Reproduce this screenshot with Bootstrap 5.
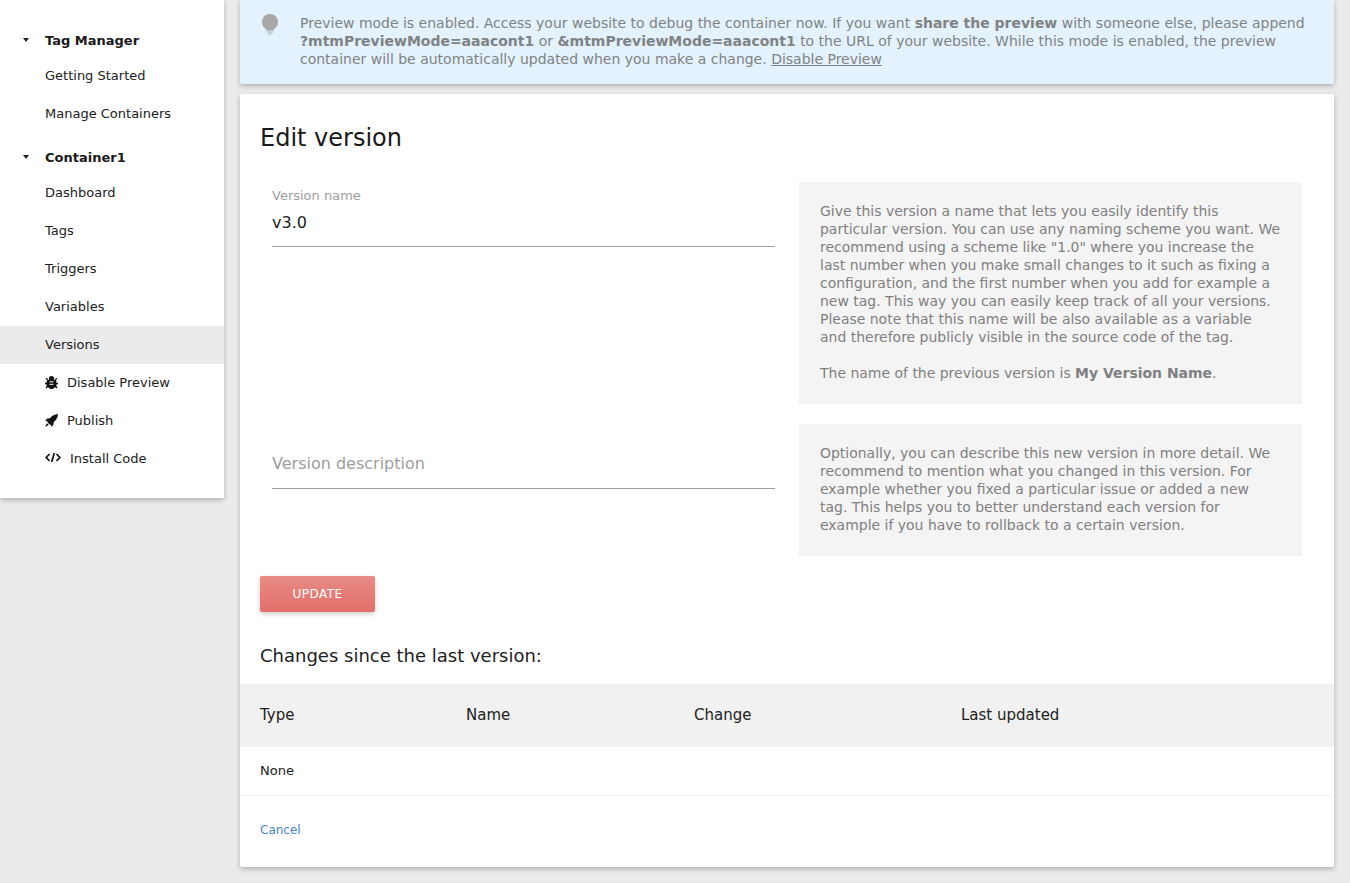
<!DOCTYPE html>
<html lang="en">
<head>
    <meta charset="UTF-8">
    <title>Edit version</title>
    <link rel="stylesheet" href="https://cdn.jsdelivr.net/npm/bootstrap@5.3.0/dist/css/bootstrap.min.css">
    <style>
        body {
            font-family: "DejaVu Sans", sans-serif;
            background-color: #ebebeb;
            color: #212121;
            font-size: 13px;
            height: 883px;
            overflow: hidden;
        }

        .page-wrap { gap: 16px; }

        /* side menu */
        .side-menu {
            width: 224px;
            height: 498px;
            background: #fff;
            padding-top: 25px;
            box-shadow: 0 2px 5px rgba(0, 0, 0, .26);
            flex-shrink: 0;
        }

        .menu-head {
            height: 32px;
            padding-left: 45px;
            font-weight: 700;
            color: #1a1a1a;
            position: relative;
            display: flex;
            align-items: center;
        }

        .menu-head.second { margin-top: 9px; }

        .menu-head::before {
            content: "";
            position: absolute;
            left: 23px;
            top: 13px;
            border-left: 3px solid transparent;
            border-right: 3px solid transparent;
            border-top: 4px solid #212121;
        }

        .menu-item {
            height: 38px;
            padding-left: 45px;
            display: flex;
            align-items: center;
            color: #212121;
            text-decoration: none;
        }

        .menu-item.on { background: #ebebeb; }
        .menu-item svg { margin-right: 9px; flex-shrink: 0; }
        .menu-item svg.rocket-ico { margin-top: -2px; }
        .menu-item svg.code-ico { margin-top: -3px; }
        .menu-item svg.bug-ico { margin-top: -1px; }

        /* main */
        .main-col { width: 1094px; }

        .notice-box {
            height: 84px;
            background: #e3f2fd;
            color: #808284;
            font-size: 13.99px;
            line-height: 18px;
            padding: 14px 20px 0 60px;
            position: relative;
            margin-bottom: 10px;
            border-radius: 0 0 2px 2px;
            box-shadow: 0 2px 5px rgba(0, 0, 0, .26);
        }

        .notice-box svg { position: absolute; left: 22px; top: 14px; }
        .notice-box a { color: #808284; }

        .edit-card {
            height: 773px;
            background: #fff;
            border-radius: 2px;
            box-shadow: 0 2px 5px rgba(0, 0, 0, .26);
            padding-top: 28px;
        }

        .edit-title {
            font-size: 24px;
            line-height: 32px;
            font-weight: 400;
            color: #1a1a1a;
            margin: 0 0 28px 20px;
        }

        .form-line { gap: 24px; padding: 0 32px; margin-bottom: 20px; }
        .field-side { width: 503px; flex-shrink: 0; }
        .field-lbl { font-size: 13px; color: #9e9e9e; line-height: 18px; padding-top: 5px; }
        .field-val { font-size: 16px; line-height: 24px; color: #212121; padding-top: 6px; height: 42px; border-bottom: 1px solid #9e9e9e; }
        .field-empty { font-size: 16px; color: #9e9e9e; line-height: 24px; margin-top: 28px; padding-bottom: 12px; border-bottom: 1px solid #9e9e9e; }

        .help-box {
            width: 503px;
            background: #f4f4f4;
            color: #808080;
            font-size: 13.98px;
            line-height: 18px;
            padding: 20px 21.500px 22px 21px;
        }

        .btn-update {
            display: block;
            width: 115px;
            height: 36px;
            margin-left: 20px;
            padding: 0;
            border: 0;
            border-radius: 2px;
            background: linear-gradient(#e78b84, #e2706a);
            color: #fff;
            font-size: 12px;
            letter-spacing: .5px;
            text-transform: uppercase;
            box-shadow: 0 2px 5px rgba(0, 0, 0, .2);
        }

        .changes-title {
            font-size: 18px;
            line-height: 24px;
            font-weight: 400;
            color: #212121;
            margin: 32px 0 16px 20px;
        }

        .change-tbl { width: 100%; margin: 0; }
        .change-tbl th {
            background: #f1f1f1;
            font-weight: 400;
            font-size: 15px;
            height: 63px;
            padding: 0 0 0 20px;
            vertical-align: middle;
            border: 0;
            color: #212121;
        }

        .change-tbl th.col-type { width: 206px; }
        .change-tbl th.col-name { width: 228px; }
        .change-tbl th.col-change { width: 267px; }

        .change-tbl td {
            font-size: 13px;
            height: 48px;
            padding: 0 0 0 20px;
            vertical-align: middle;
            border-bottom: 1px solid #f0f0f0;
            color: #212121;
        }

        .cancel-link { display: block; margin: 25px 0 0 20px; font-size: 12px; color: #4a86c5; text-decoration: none; }
    </style>
</head>

<body>
    <div class="d-flex page-wrap">
        <div class="side-menu">
            <div class="menu-head">Tag Manager</div>
            <a class="menu-item" href="#">Getting Started</a>
            <a class="menu-item" href="#">Manage Containers</a>
            <div class="menu-head second">Container1</div>
            <a class="menu-item" href="#">Dashboard</a>
            <a class="menu-item" href="#">Tags</a>
            <a class="menu-item" href="#">Triggers</a>
            <a class="menu-item" href="#">Variables</a>
            <a class="menu-item on" href="#">Versions</a>
            <a class="menu-item" href="#">
                <svg class="bug-ico" width="13" height="13" viewBox="0 0 13 13"><g fill="#111"><circle cx="6.500" cy="2.600" r="2.600"/><rect x="1.500" y="3.800" width="10" height="8" rx="3"/><path d="M3.500 11h6L8 13H5zM.5 2h1.300l1.700 2-1 1zM12.500 2h-1.300l-1.700 2 1 1zM0 6.800h2v1.400H0zM11 6.800h2v1.400h-2zM.5 11.600l1.700-2 1 1-1.500 1.900zM12.500 11.600l-1.700-2-1 1 1.500 1.900z"/></g><path d="M4.500 5.800h4M4.500 8.300h4" stroke="#fff" stroke-width="1"/></svg>
                Disable Preview
            </a>
            <a class="menu-item" href="#">
                <svg class="rocket-ico" width="13" height="13" viewBox="0 0 13 13"><path fill="#111" d="M13 0C9.600.2 7 1.600 4.900 4.300L2.200 4.600 0 6.800l2.600.2-.5.9 3 3 .9-.5.2 2.600L8.400 10.800l.3-2.700C11.400 6 12.800 3.400 13 0zM1.900 9.300L0 13l3.700-1.900z"/></svg>
                Publish
            </a>
            <a class="menu-item" href="#">
                <svg class="code-ico" width="16" height="9" viewBox="0 0 16 9"><path fill="none" stroke="#111" stroke-width="1.700" d="M4.500 1L1.200 4.500 4.500 8M11.500 1L14.800 4.500 11.500 8M9.300 0L6.700 9"/></svg>
                Install Code
            </a>
        </div>

        <div class="main-col">
            <div class="notice-box">
                <svg width="16" height="21" viewBox="0 0 16 21"><path fill="#a8a8a8" d="M8 0a8 8 0 0 0-5 14.200c.9.800 1.200 1.500 1.300 2.300h7.400c.1-.8.400-1.500 1.300-2.300A8 8 0 0 0 8 0z"/><path fill="#a8a8a8" d="M4.800 17.500h6.400v1H4.800zM6 19.500h4l-.8 1H6.800z"/></svg>
                Preview mode is enabled. Access your website to debug the container now. If you want <strong>share the preview</strong> with someone else, please append <strong>?mtmPreviewMode=aaacont1</strong> or <strong>&amp;mtmPreviewMode=aaacont1</strong> to the URL of your website. While this mode is enabled, the preview container will be automatically updated when you make a change. <a href="#">Disable Preview</a>
            </div>

            <div class="edit-card">
                <h2 class="edit-title">Edit version</h2>

                <div class="d-flex form-line">
                    <div class="field-side">
                        <div class="field-lbl">Version name</div>
                        <div class="field-val">v3.0</div>
                    </div>
                    <div class="help-box">
                        Give this version a name that lets you easily identify this particular version. You can use any naming scheme you want. We recommend using a scheme like "1.0" where you increase the last number when you make small changes to it such as fixing a configuration, and the first number when you add for example a new tag. This way you can easily keep track of all your versions. Please note that this name will be also available as a variable and therefore publicly visible in the source code of the tag.<br><br>
                        The name of the previous version is <strong>My Version Name</strong>.
                    </div>
                </div>

                <div class="d-flex form-line">
                    <div class="field-side">
                        <div class="field-empty">Version description</div>
                    </div>
                    <div class="help-box">
                        Optionally, you can describe this new version in more detail. We recommend to mention what you changed in this version. For example whether you fixed a particular issue or added a new tag. This helps you to better understand each version for example if you have to rollback to a certain version.
                    </div>
                </div>

                <button class="btn-update" type="button">Update</button>

                <h3 class="changes-title">Changes since the last version:</h3>

                <table class="change-tbl">
                    <thead>
                        <tr>
                            <th class="col-type">Type</th>
                            <th class="col-name">Name</th>
                            <th class="col-change">Change</th>
                            <th>Last updated</th>
                        </tr>
                    </thead>
                    <tbody>
                        <tr><td colspan="4">None</td></tr>
                    </tbody>
                </table>

                <a class="cancel-link" href="#">Cancel</a>
            </div>
        </div>
    </div>
    <script src="https://cdn.jsdelivr.net/npm/bootstrap@5.3.0/dist/js/bootstrap.bundle.min.js"></script>
</body>

</html>
